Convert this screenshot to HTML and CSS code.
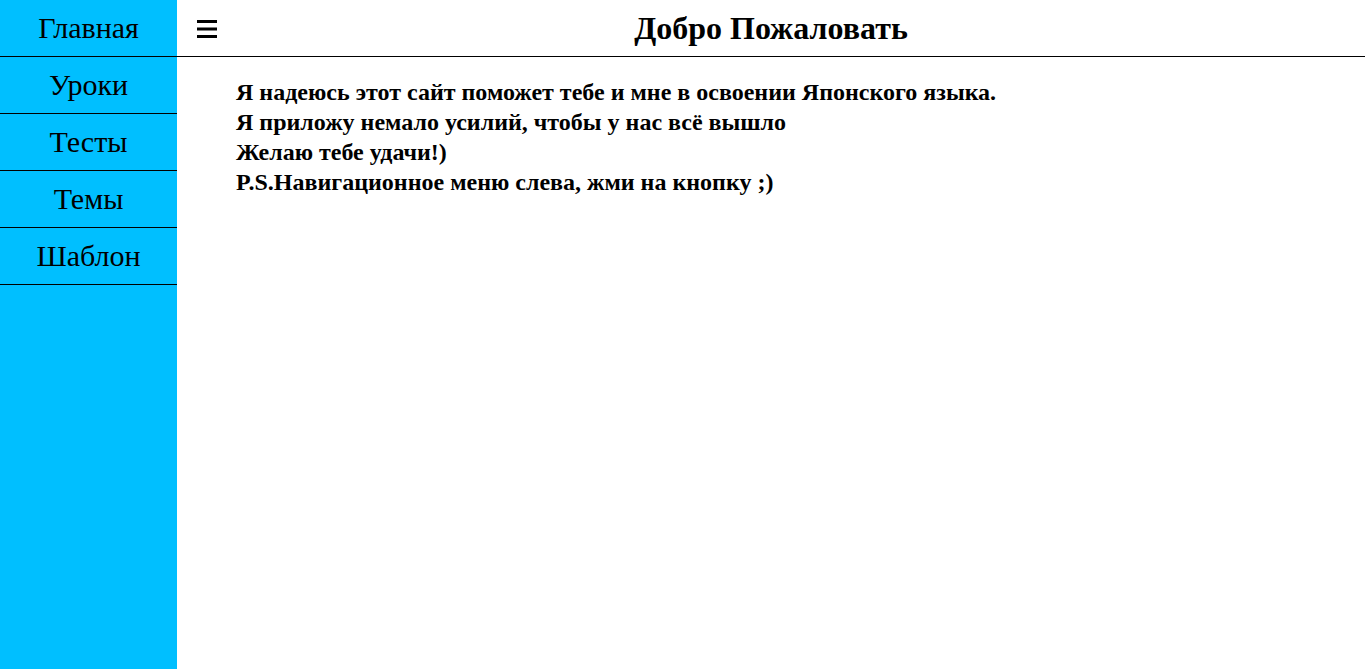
FILE: index.html
```html
<!DOCTYPE html>
<html lang="ru">
<head>
<meta charset="utf-8">
<title>Добро Пожаловать</title>
<link rel="stylesheet" href="styles.css">
</head>
<body>
<div class="page">
  <nav class="sidebar">
    <a class="nav-item" href="#">Главная</a>
    <a class="nav-item" href="#">Уроки</a>
    <a class="nav-item" href="#">Тесты</a>
    <a class="nav-item" href="#">Темы</a>
    <a class="nav-item" href="#">Шаблон</a>
  </nav>
  <main class="main">
    <header class="header">
      <span class="burger" aria-label="menu">
        <svg width="20" height="18" viewBox="0 0 20 18"><rect x="0" y="0" width="20" height="3" fill="#000"/><rect x="0" y="7.5" width="20" height="3" fill="#000"/><rect x="0" y="15" width="20" height="3" fill="#000"/></svg>
      </span>
      <h1 class="title">Добро Пожаловать</h1>
    </header>
    <section class="content">
      <p class="line">Я надеюсь этот сайт поможет тебе и мне в освоении Японского языка.</p>
      <p class="line">Я приложу немало усилий, чтобы у нас всё вышло</p>
      <p class="line">Желаю тебе удачи!)</p>
      <p class="line">P.S.Навигационное меню слева, жми на кнопку ;)</p>
    </section>
  </main>
</div>
</body>
</html>
```
FILE: styles.css
```css
html, body {
  margin: 0;
  padding: 0;
  height: 100%;
}
body {
  font-family: "Liberation Serif", "Times New Roman", serif;
  color: #000;
  background: #fff;
}
.page {
  display: flex;
  min-height: 100vh;
}
.sidebar {
  width: 177px;
  flex: 0 0 177px;
  background: #00bfff;
  display: flex;
  flex-direction: column;
}
.nav-item {
  height: 56px;
  border-bottom: 1px solid #000;
  display: flex;
  align-items: center;
  justify-content: center;
  font-size: 30px;
  color: #000;
  text-decoration: none;
}
.main {
  flex: 1;
  margin-right: 2px;
  display: flex;
  flex-direction: column;
}
.header {
  height: 56px;
  border-bottom: 1px solid #000;
  position: relative;
  display: flex;
  align-items: center;
  justify-content: center;
}
.burger {
  position: absolute;
  left: 20px;
  top: 20px;
  width: 20px;
  height: 18px;
  display: block;
}
.burger svg {
  display: block;
}
.title {
  margin: 0;
  font-size: 32px;
  font-weight: bold;
}
.content {
  padding: 20px 0 0 59px;
}
.line {
  margin: 0;
  font-size: 24px;
  font-weight: bold;
  line-height: 30px;
}
```
